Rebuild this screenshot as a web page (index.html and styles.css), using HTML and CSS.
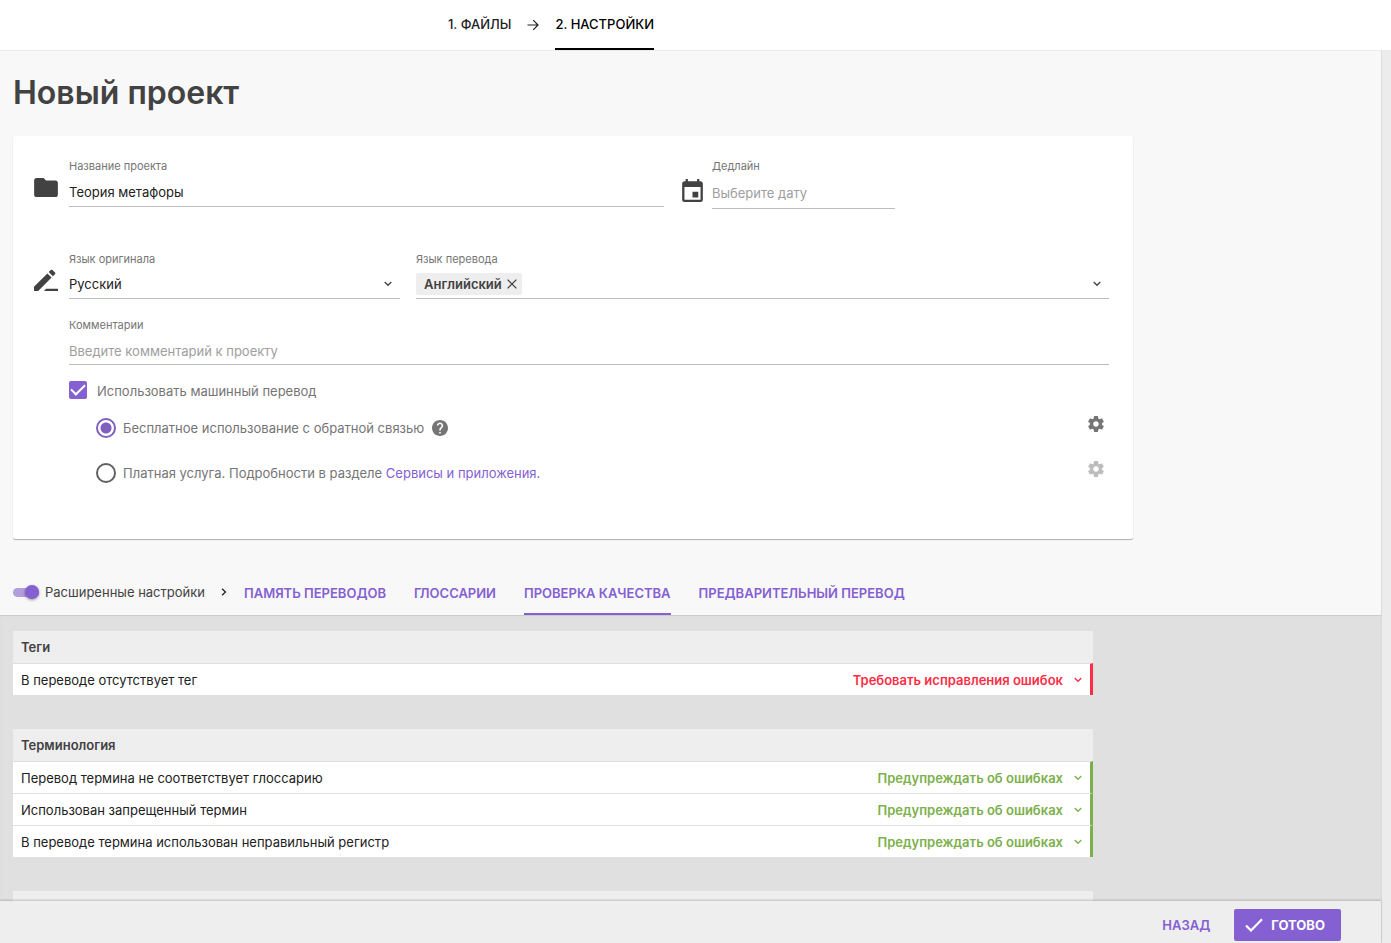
FILE: index.html
```html
<!DOCTYPE html>
<html lang="ru">
<head>
<meta charset="utf-8">
<title>Новый проект</title>
<link rel="stylesheet" href="styles.css">
</head>
<body>
<svg class="sprite" aria-hidden="true">
  <symbol id="chevron" viewBox="0 0 8 6"><path d="M.7 1 4 4.300 7.300 1" fill="none" stroke="currentColor" stroke-width="1.300"/></symbol>
  <symbol id="gear" viewBox="2 2 20 20"><path fill="currentColor" d="M19.430 12.980c.04-.32.070-.64.070-.98s-.03-.66-.07-.98l2.110-1.650c.19-.15.24-.42.120-.64l-2-3.460c-.12-.22-.39-.3-.61-.22l-2.490 1c-.52-.4-1.080-.73-1.690-.98l-.38-2.650C14.460 2.180 14.250 2 14 2h-4c-.25 0-.46.180-.49.420l-.38 2.650c-.61.250-1.170.590-1.690.980l-2.490-1c-.23-.09-.49 0-.61.220l-2 3.460c-.13.220-.07.490.120.640l2.110 1.650c-.04.320-.07.650-.07.980s.03.660.070.980l-2.110 1.650c-.19.150-.24.420-.12.640l2 3.460c.12.220.39.300.61.220l2.490-1c.52.400 1.080.730 1.690.980l.38 2.650c.03.240.24.420.49.420h4c.25 0 .46-.18.49-.42l.38-2.650c.61-.25 1.170-.59 1.690-.98l2.490 1c.23.090.49 0 .61-.22l2-3.460c.12-.22.07-.49-.12-.64l-2.110-1.650zM12 15.500c-1.930 0-3.500-1.570-3.500-3.500s1.570-3.500 3.500-3.500 3.500 1.570 3.500 3.500-1.570 3.500-3.500 3.500z"/></symbol>
</svg>

<header class="topbar">
  <nav class="steps">
    <a class="step" href="#files">1. ФАЙЛЫ</a>
    <svg class="step-arrow" viewBox="0 0 12 12" aria-hidden="true"><path d="M.5 6H11M6.200 1.200 11 6 6.200 10.800" fill="none" stroke="currentColor" stroke-width="1.200"/></svg>
    <a class="step step-active" href="#settings" aria-current="step">2. НАСТРОЙКИ</a>
  </nav>
</header>

<div class="page">
  <div class="main">
    <main class="content">
      <h1 class="title">Новый проект</h1>

      <form class="card">
        <div class="row row-name">
          <svg class="icon-folder" viewBox="2 4 20 16" aria-hidden="true"><path fill="currentColor" d="M10 4H4c-1.100 0-2 .9-2 2v12c0 1.100.9 2 2 2h16c1.100 0 2-.9 2-2V8c0-1.100-.9-2-2-2h-8z"/></svg>
          <div class="field">
            <label class="label" for="name">Название проекта</label>
            <input class="control" id="name" type="text" value="Теория метафоры">
          </div>
          <svg class="icon-calendar" viewBox="3 1 18 20" aria-hidden="true"><path fill="currentColor" d="M17 12h-5v5h5zM16 1v2H8V1H6v2H5c-1.110 0-2 .9-2 2v14c0 1.100.890 2 2 2h14c1.100 0 2-.9 2-2V5c0-1.100-.9-2-2-2h-1V1zm3 18H5V8h14z"/></svg>
          <div class="field">
            <label class="label" for="deadline">Дедлайн</label>
            <input class="control control-date" id="deadline" type="text" placeholder="Выберите дату">
          </div>
        </div>

        <div class="row row-lang">
          <svg class="icon-pencil" viewBox="0 0 24 22" aria-hidden="true"><path fill="currentColor" d="M0 17.800V22h4.200L17.600 8.600 13.400 4.400zM18.900 7.300 21 5.200c.5-.5.5-1.200 0-1.700L18.500 1c-.5-.5-1.200-.5-1.700 0l-2.100 2.100zM12.100 19.800H24V22H9.900z"/></svg>
          <div class="field field-lang">
            <label class="label" for="source">Язык оригинала</label>
            <div class="picker">
              <select class="control" id="source"><option>Русский</option></select>
              <svg class="chevron"><use href="#chevron"/></svg>
            </div>
          </div>
          <div class="field field-lang">
            <span class="label">Язык перевода</span>
            <div class="tags">
              <span class="tag">Английский
                <button class="tag-remove" type="button" aria-label="Удалить язык"><svg viewBox="0 0 10 10"><path d="M.6.6 9.400 9.400M9.400.6.6 9.400" stroke="currentColor" stroke-width="1.300"/></svg></button>
              </span>
              <button class="tags-open" type="button" aria-label="Выбрать язык перевода"><svg class="chevron"><use href="#chevron"/></svg></button>
            </div>
          </div>
        </div>

        <div class="details">
          <div class="field">
            <label class="label" for="comment">Комментарии</label>
            <input class="control control-comment" id="comment" type="text" placeholder="Введите комментарий к проекту">
          </div>
          <label class="check"><input class="checkbox" type="checkbox" checked>Использовать машинный перевод</label>
          <div class="option">
            <input class="radio" type="radio" name="mt" id="mt-free" checked>
            <label for="mt-free">Бесплатное использование с обратной связью</label>
            <svg class="icon-help" viewBox="2 2 20 20" role="img" aria-label="Справка"><path fill="currentColor" d="M12 2C6.480 2 2 6.480 2 12s4.480 10 10 10 10-4.480 10-10S17.520 2 12 2zm1 17h-2v-2h2zm2.070-7.750-.9.920C13.450 12.900 13 13.500 13 15h-2v-.5c0-1.100.450-2.100 1.170-2.830l1.240-1.260c.370-.360.590-.860.590-1.410 0-1.100-.9-2-2-2s-2 .9-2 2H8c0-2.210 1.790-4 4-4s4 1.790 4 4c0 .880-.360 1.680-.930 2.250z"/></svg>
            <button class="gear" type="button" aria-label="Настройки"><svg><use href="#gear"/></svg></button>
          </div>
          <div class="option">
            <input class="radio" type="radio" name="mt" id="mt-paid">
            <label for="mt-paid">Платная услуга. Подробности в разделе <a href="#services">Сервисы и приложения.</a></label>
            <button class="gear" type="button" aria-label="Настройки" disabled><svg><use href="#gear"/></svg></button>
          </div>
        </div>
      </form>

      <div class="tabbar">
        <label class="advanced"><input class="switch" type="checkbox" role="switch" checked>Расширенные настройки</label>
        <svg class="next" viewBox="0 0 6 8" aria-hidden="true"><path d="M1 .7 4.500 4 1 7.300" fill="none" stroke="currentColor" stroke-width="1.300"/></svg>
        <nav class="tabs">
          <a class="tab" href="#tm">ПАМЯТЬ ПЕРЕВОДОВ</a>
          <a class="tab" href="#glossary">ГЛОССАРИИ</a>
          <a class="tab tab-active" href="#qa">ПРОВЕРКА КАЧЕСТВА</a>
          <a class="tab" href="#pre">ПРЕДВАРИТЕЛЬНЫЙ ПЕРЕВОД</a>
        </nav>
      </div>

      <section class="checks">
        <table class="rules">
          <thead><tr><th colspan="2">Теги</th></tr></thead>
          <tbody>
            <tr class="error"><td><label for="r1">В переводе отсутствует тег</label></td><td class="level"><div class="picker"><select id="r1"><option>Требовать исправления ошибок</option></select><svg class="chevron"><use href="#chevron"/></svg></div></td></tr>
          </tbody>
        </table>
        <table class="rules">
          <thead><tr><th colspan="2">Терминология</th></tr></thead>
          <tbody>
            <tr class="warning"><td><label for="r2">Перевод термина не соответствует глоссарию</label></td><td class="level"><div class="picker"><select id="r2"><option>Предупреждать об ошибках</option></select><svg class="chevron"><use href="#chevron"/></svg></div></td></tr>
            <tr class="warning"><td><label for="r3">Использован запрещенный термин</label></td><td class="level"><div class="picker"><select id="r3"><option>Предупреждать об ошибках</option></select><svg class="chevron"><use href="#chevron"/></svg></div></td></tr>
            <tr class="warning"><td><label for="r4">В переводе термина использован неправильный регистр</label></td><td class="level"><div class="picker"><select id="r4"><option>Предупреждать об ошибках</option></select><svg class="chevron"><use href="#chevron"/></svg></div></td></tr>
          </tbody>
        </table>
        <div class="rules-next"></div>
      </section>
    </main>

    <footer class="footer">
      <button class="back" type="button">НАЗАД</button>
      <button class="done" type="button"><svg viewBox="0 0 18 14" aria-hidden="true"><path d="M1 7.500 6 12.500 17 1.300" fill="none" stroke="currentColor" stroke-width="2.200"/></svg>ГОТОВО</button>
    </footer>
  </div>
  <div class="gutter"></div>
</div>
</body>
</html>
```
FILE: styles.css
```css
* { box-sizing: border-box; }

body {
  margin: 0;
  height: 100vh;
  display: flex;
  flex-direction: column;
  overflow: hidden;
  background: #f8f8f8;
  color: #424242;
  font: 13px/20px Inter, "Liberation Sans", sans-serif;
}

a { color: #8460d2; text-decoration: none; }
svg { display: block; flex: none; }
button, input, select { font: inherit; color: inherit; margin: 0; }
button { padding: 0; border: 0; background: none; cursor: pointer; }
.sprite { position: absolute; width: 0; height: 0; }

.topbar {
  flex: none;
  background: #fff;
  border-bottom: 1px solid #ebebeb;
}
.steps {
  display: flex;
  align-items: center;
  justify-content: center;
  max-width: 1102px;
  height: 50px;
}
.step {
  height: 50px;
  line-height: 48px;
  color: #212121;
  font-weight: 500;
  border-bottom: 2px solid transparent;
}
.step-active { border-color: #000; color: #000; }
.step-arrow { width: 12px; height: 12px; margin: 0 16px; color: #212121; }

.page { flex: 1; min-height: 0; display: flex; }
.main { flex: 1; min-width: 0; display: flex; flex-direction: column; }
.gutter { width: 10px; background: #ececec; border-left: 1px solid #dcdcdc; }
.content { flex: 1; min-height: 0; overflow: hidden; display: flex; flex-direction: column; }

.title {
  margin: 20px 13px 21px;
  font-size: 32px;
  line-height: 44px;
  font-weight: 600;
}

.card {
  max-width: 1120px;
  margin: 0 13px;
  padding: 22px 24px 56px 21px;
  background: #fff;
  border-radius: 2px;
  box-shadow: 0 1px 1px rgba(0, 0, 0, .3);
}
.row { display: grid; }
.row-name { grid-template-columns: 24px minmax(0, 606px) 39px 192px; }
.row-lang { grid-template-columns: 24px minmax(0, 342fr) minmax(0, 709fr); margin-top: 42px; }
.row > .field:nth-child(2) { margin-left: 11px; }
.row-name > .field:last-child { margin-left: 9px; }
.row-lang > .field:last-child { margin-left: 16px; }
.icon-folder { width: 24px; height: 19px; margin-top: 20px; }
.icon-calendar { width: 21px; height: 23px; margin: 21px 0 0 18px; }
.icon-pencil { width: 24px; height: 22px; margin-top: 18px; }

.field { display: flex; flex-direction: column; gap: 4px; min-width: 0; }
.field-lang { gap: 2px; }
.label { font-size: 11px; line-height: 16px; color: #757575; }
.control {
  width: 100%;
  height: 29px;
  padding: 0;
  border: 0;
  border-bottom: 1px solid #bdbdbd;
  border-radius: 0;
  background: none;
  color: #212121;
  outline: 0;
}
.control::placeholder { color: #9e9e9e; opacity: 1; }
.control-date { height: 31px; }
.control-comment { height: 28px; }

.picker { display: grid; align-items: center; }
.picker > * { grid-area: 1 / 1; }
.picker select { appearance: none; width: 100%; }
.picker .control { height: 30px; }
.chevron { width: 8px; height: 6px; }
.picker .chevron { justify-self: end; margin-right: 8px; pointer-events: none; }

.tags {
  display: flex;
  align-items: center;
  justify-content: space-between;
  height: 30px;
  padding-right: 8px;
  border-bottom: 1px solid #bdbdbd;
}
.tag {
  display: flex;
  align-items: center;
  gap: 5px;
  height: 22px;
  padding: 0 5px 0 8px;
  border-radius: 2px;
  background: #eee;
  font-weight: 600;
}
.tag-remove svg { width: 10px; height: 10px; }

.details { margin: 18px 0 0 35px; color: #757575; }
.check { display: flex; align-items: center; gap: 10px; height: 20px; margin: 16px 0 17px; }
.checkbox {
  appearance: none;
  display: grid;
  place-items: center;
  width: 18px;
  height: 18px;
  margin-bottom: 2px;
  border-radius: 2px;
  background: #8460d2;
}
.checkbox::after {
  content: "";
  width: 12px;
  height: 6px;
  margin-bottom: 5px;
  border: solid #fff;
  border-width: 0 0 2px 2px;
  transform: rotate(-45deg);
}
.option { display: flex; align-items: center; height: 20px; }
.option + .option { margin-top: 25px; }
.radio {
  appearance: none;
  width: 20px;
  height: 20px;
  margin: 0 7px 0 27px;
  border: 2px solid #616161;
  border-radius: 50%;
}
.radio:checked {
  border-color: #7e5fc0;
  background: radial-gradient(circle, #7e5fc0 5px, transparent 6px);
}
.icon-help { width: 16px; height: 16px; margin-left: 8px; }
.gear { margin: 0 5px 8px auto; }
.gear svg { width: 16px; height: 16px; }
.gear:disabled { color: #bdbdbd; }

.tabbar {
  flex: none;
  display: flex;
  align-items: center;
  height: 46px;
  margin-top: 30px;
  padding: 0 13px;
}
.advanced { display: flex; align-items: center; gap: 6px; }
.switch {
  appearance: none;
  display: flex;
  align-items: center;
  justify-content: flex-end;
  width: 26px;
  height: 9px;
  border-radius: 5px;
  background: #b39ddb;
}
.switch::after {
  content: "";
  width: 14px;
  height: 14px;
  flex: none;
  border-radius: 50%;
  background: #8460d2;
  box-shadow: 0 1px 3px rgba(0, 0, 0, .4);
}
.next { width: 6px; height: 8px; margin: 0 17px 0 16px; color: #212121; }
.tabs { display: flex; gap: 28px; }
.tab {
  height: 46px;
  line-height: 48px;
  font-weight: 600;
  border-bottom: 2px solid transparent;
}
.tab-active { border-color: #8460d2; }

.checks {
  flex: 1 0 auto;
  display: flex;
  flex-direction: column;
  gap: 34px;
  padding: 16px 13px 0;
  background: #e0e0e0;
  box-shadow: inset 0 1px 1px rgba(0, 0, 0, .1);
}
.rules { width: 100%; max-width: 1080px; border-spacing: 0; background: #fff; color: #212121; }
.rules th {
  height: 32px;
  padding: 0 8px;
  background: #eee;
  color: #424242;
  font-weight: 600;
  text-align: left;
}
.rules td { height: 32px; padding: 0 8px; border-top: 1px solid #e0e0e0; }
.rules .level { width: 260px; border-right: 3px solid; border-right-color: currentColor; }
.rules select {
  height: 30px;
  padding: 0 19px 0 0;
  border: 0;
  background: none;
  font-weight: 600;
  text-align: right;
  text-align-last: right;
}
.rules .chevron { margin-right: 0; }
.error .level { color: #ff2d46; }
.warning .level { color: #7cb04c; }
.rules-next { max-width: 1080px; height: 32px; background: #eee; }

.footer {
  position: relative;
  flex: none;
  display: flex;
  justify-content: flex-end;
  gap: 24px;
  padding: 8px 40px 2px;
  background: #eee;
  box-shadow: 0 -1px 2px rgba(0, 0, 0, .2);
}
.back { color: #8460d2; font-weight: 600; }
.done {
  display: flex;
  align-items: center;
  gap: 8px;
  height: 32px;
  padding: 0 16px 0 11px;
  border-radius: 2px;
  background: #8460d2;
  color: #fff;
  font-weight: 700;
}
.done svg { width: 18px; height: 14px; }
```
